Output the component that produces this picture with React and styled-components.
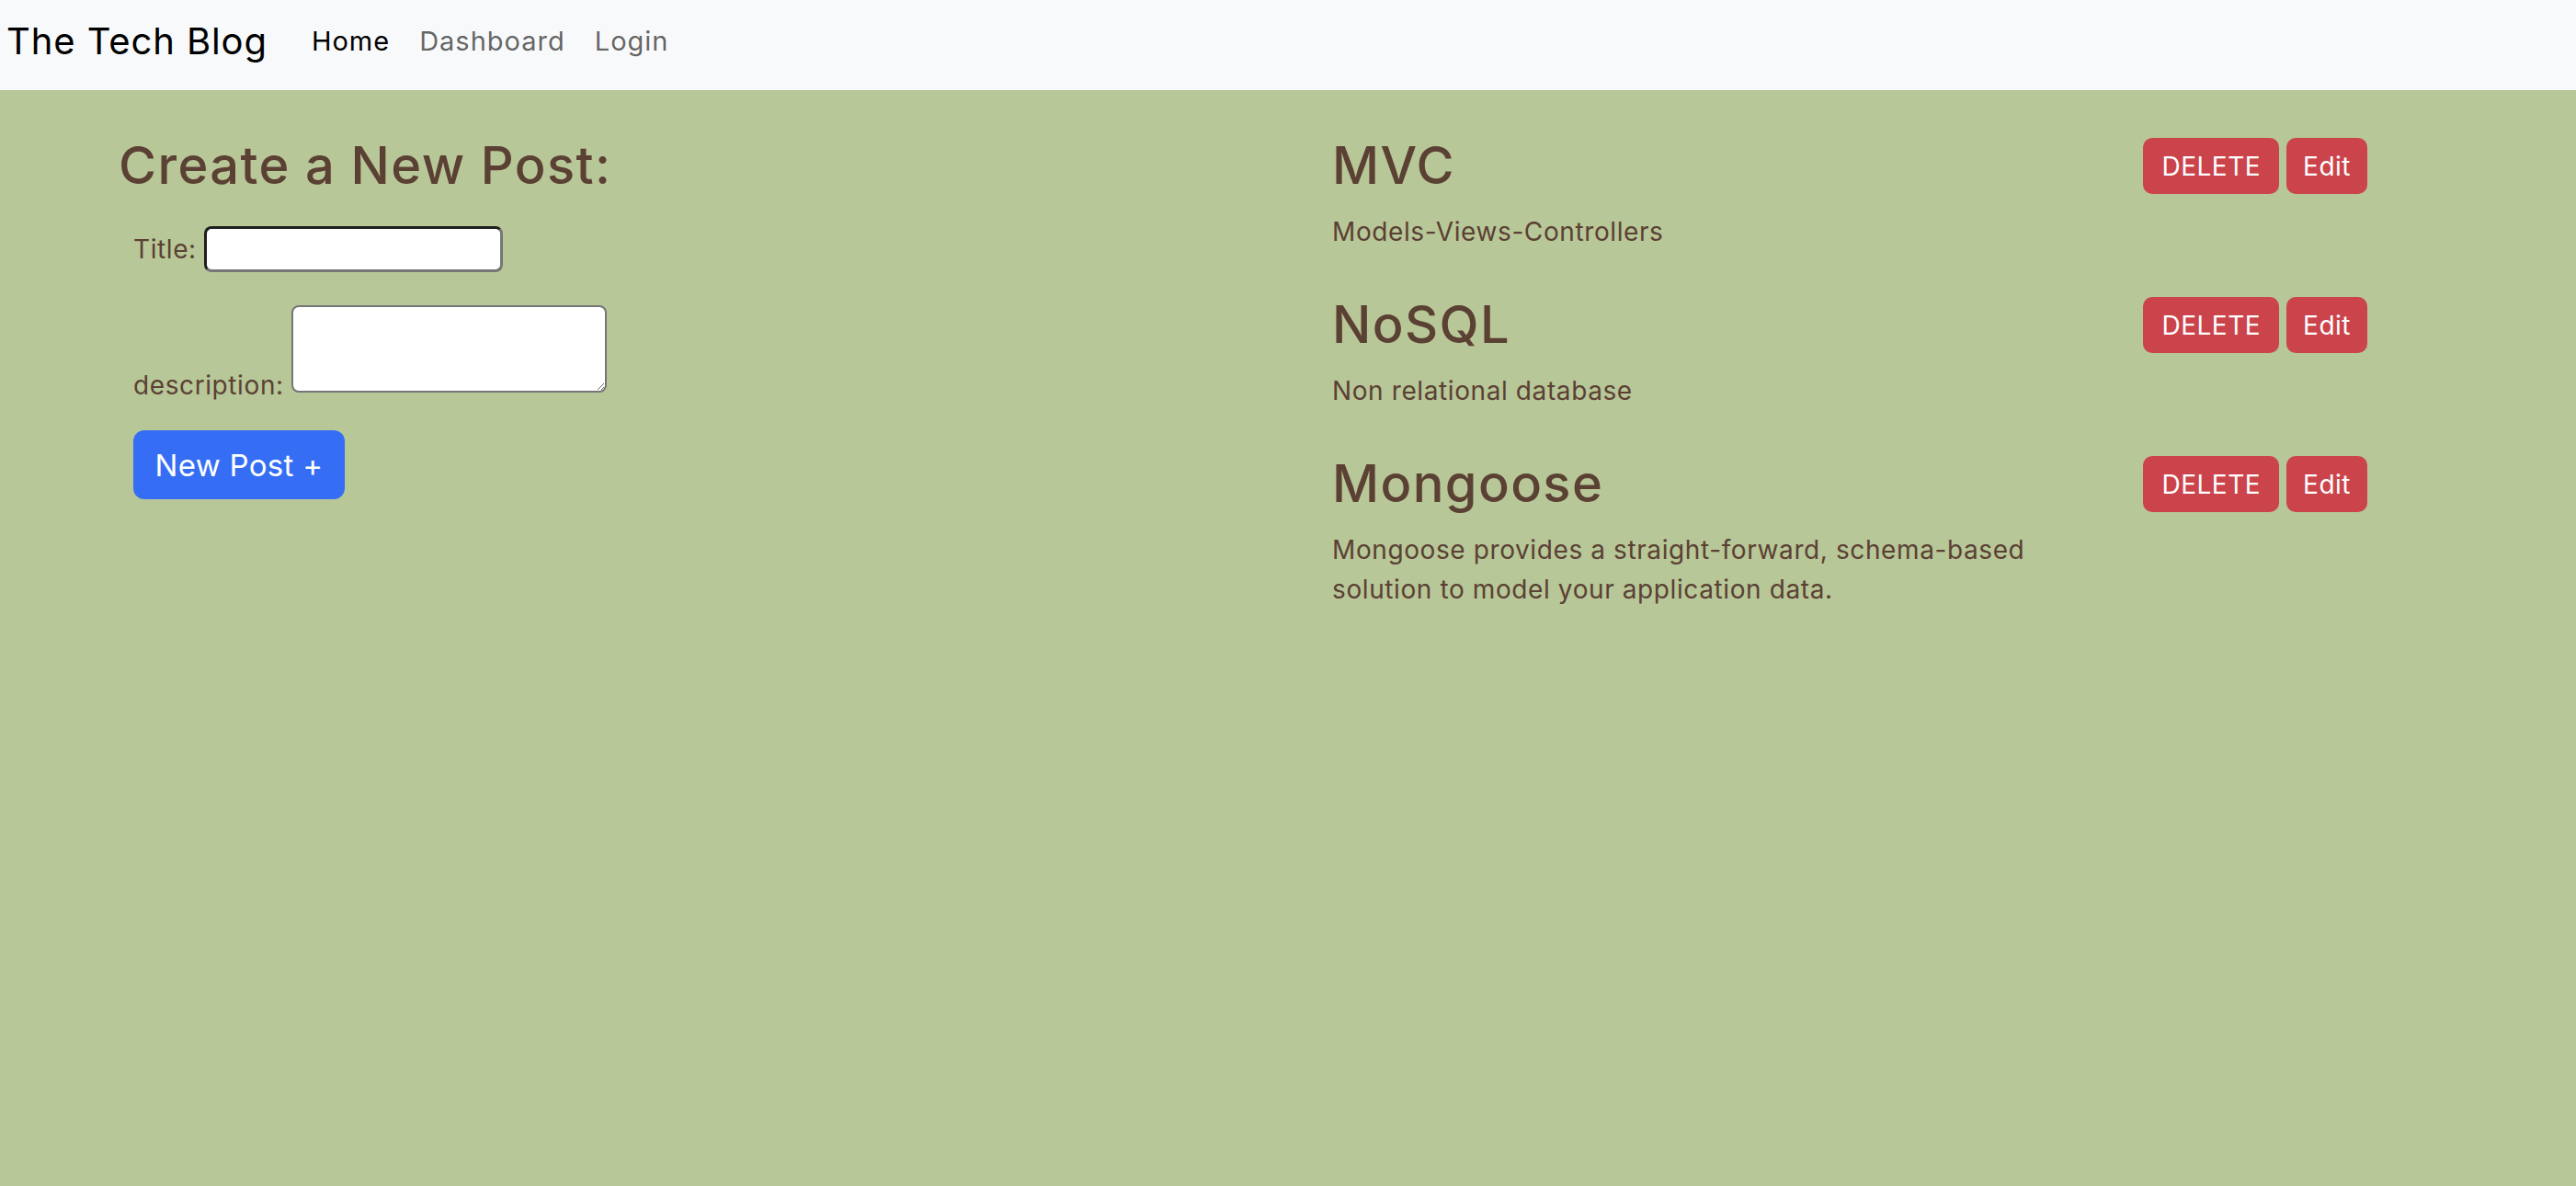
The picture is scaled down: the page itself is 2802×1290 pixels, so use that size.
import React from "react";
import styled, { createGlobalStyle } from "styled-components";

const Global = createGlobalStyle`
  html, body { margin: 0; padding: 0; }
  body {
    font-family: Inter, "Open Sans", "DejaVu Sans", sans-serif;
    font-size: 28px;
    line-height: 1.5;
    background: #b7c797;
    color: #5b4034;
  }
  * { box-sizing: border-box; }
`;

const Page = styled.div`
  min-height: 1290px;
  background: #b7c797;
`;

const Navbar = styled.nav`
  height: 98px;
  background: #f8f9fa;
  display: flex;
  align-items: center;
  padding: 0 7px 8px;
`;

const Brand = styled.a`
  font-size: 40px;
  color: #000;
  letter-spacing: 0.9px;
  margin-right: 48px;
  text-decoration: none;
`;

const NavLinks = styled.div`
  display: flex;
  gap: 32px;
`;

const NavLink = styled.a`
  font-size: 29px;
  letter-spacing: 1px;
  color: ${(p) => (p.$active ? "#000" : "rgba(0,0,0,0.62)")};
  text-decoration: none;
`;

const Main = styled.main`
  display: grid;
  grid-template-columns: 1320px 1126px;
  padding: 49px 0 0 129px;
`;

const Heading = styled.h2`
  margin: 0;
  font-size: 56px;
  font-weight: 500;
  line-height: 67px;
  letter-spacing: 1.4px;
  color: #5b4034;
`;

const Form = styled.form`
  display: flex;
  flex-direction: column;
  align-items: flex-start;
`;

const FieldRow = styled.div`
  display: flex;
  align-items: ${(p) => (p.$bottom ? "flex-end" : "center")};
  gap: 8px;
  margin-left: 16px;
  margin-top: ${(p) => p.$mt}px;
`;

const Label = styled.label`
  font-size: 28px;
  letter-spacing: 0.6px;
  line-height: 42px;
  color: #5b4034;
  margin-bottom: ${(p) => (p.$drop ? "-13px" : "0")};
`;

const TextInput = styled.input`
  width: 325px;
  height: 50px;
  border-radius: 8px;
  border: 3px solid;
  border-color: #1e1e1e #767676 #767676 #1e1e1e;
  background: #fff;
  outline: none;
  font-size: 24px;
`;

const TextArea = styled.textarea`
  width: 343px;
  height: 95px;
  border-radius: 8px;
  border: 2px solid #767676;
  background: #fff;
  outline: none;
`;

const PrimaryButton = styled.button`
  margin: 41px 0 0 16px;
  width: 230px;
  height: 75px;
  border: none;
  border-radius: 12px;
  background: #356ef4;
  color: #fff;
  font-family: inherit;
  font-size: 33px;
  letter-spacing: 0.3px;
  cursor: pointer;
`;

const PostList = styled.div`
  display: flex;
  flex-direction: column;
  gap: 46px;
`;

const Post = styled.article`
  display: flex;
  flex-direction: column;
`;

const PostHeader = styled.div`
  display: flex;
  align-items: center;
  justify-content: space-between;
`;

const Actions = styled.div`
  display: flex;
  gap: 8px;
`;

const DangerButton = styled.button`
  height: 61px;
  padding: 0 ${(p) => p.$px}px;
  border: none;
  border-radius: 10px;
  background: #cb444c;
  color: #fff;
  font-family: inherit;
  font-size: 28px;
  letter-spacing: 0.5px;
  cursor: pointer;
`;

const Description = styled.p`
  margin: 17px 0 0;
  max-width: 790px;
  font-size: 28px;
  line-height: 43px;
  letter-spacing: 0.6px;
  color: #5b4034;
`;

const posts = [
  { title: "MVC", body: "Models-Views-Controllers" },
  { title: "NoSQL", body: "Non relational database" },
  {
    title: "Mongoose",
    body: "Mongoose provides a straight-forward, schema-based solution to model your application data.",
  },
];

export default function App() {
  return (
    <Page>
      <Global />
      <Navbar>
        <Brand href="#">The Tech Blog</Brand>
        <NavLinks>
          <NavLink $active href="#">Home</NavLink>
          <NavLink href="#">Dashboard</NavLink>
          <NavLink href="#">Login</NavLink>
        </NavLinks>
      </Navbar>
      <Main>
        <Form onSubmit={(e) => e.preventDefault()}>
          <Heading>Create a New Post:</Heading>
          <FieldRow $mt={32}>
            <Label htmlFor="title">Title:</Label>
            <TextInput id="title" type="text" />
          </FieldRow>
          <FieldRow $mt={36} $bottom>
            <Label htmlFor="desc" $drop>description:</Label>
            <TextArea id="desc" />
          </FieldRow>
          <PrimaryButton type="submit">New Post +</PrimaryButton>
        </Form>
        <PostList>
          {posts.map((p) => (
            <Post key={p.title}>
              <PostHeader>
                <Heading>{p.title}</Heading>
                <Actions>
                  <DangerButton $px={20}>DELETE</DangerButton>
                  <DangerButton $px={18}>Edit</DangerButton>
                </Actions>
              </PostHeader>
              <Description>{p.body}</Description>
            </Post>
          ))}
        </PostList>
      </Main>
    </Page>
  );
}
